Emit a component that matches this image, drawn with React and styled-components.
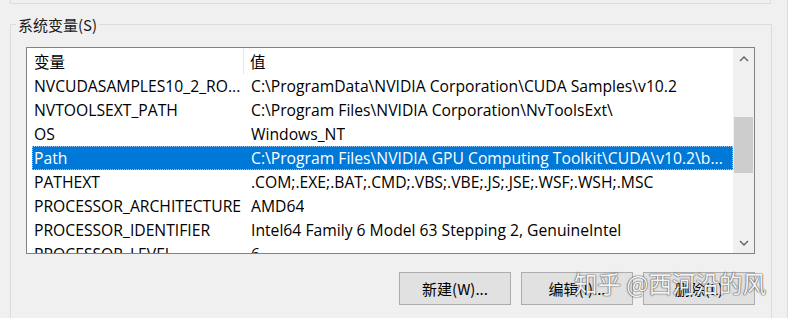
import React from "react";
import styled, { createGlobalStyle } from "styled-components";

const rows = [
  ["NVCUDASAMPLES10_2_RO...", "C:\\ProgramData\\NVIDIA Corporation\\CUDA Samples\\v10.2"],
  ["NVTOOLSEXT_PATH", "C:\\Program Files\\NVIDIA Corporation\\NvToolsExt\\"],
  ["OS", "Windows_NT"],
  ["Path", "C:\\Program Files\\NVIDIA GPU Computing Toolkit\\CUDA\\v10.2\\b..."],
  ["PATHEXT", ".COM;.EXE;.BAT;.CMD;.VBS;.VBE;.JS;.JSE;.WSF;.WSH;.MSC"],
  ["PROCESSOR_ARCHITECTURE", "AMD64"],
  ["PROCESSOR_IDENTIFIER", "Intel64 Family 6 Model 63 Stepping 2, GenuineIntel"],
  ["PROCESSOR_LEVEL", "6"],
];

const GlobalStyle = createGlobalStyle`
  html, body {
    margin: 0;
    padding: 0;
    background: #f0f0f0;
  }
  body {
    font-family: "Open Sans", "Noto Sans CJK SC", sans-serif;
    font-size: 15.7px;
    color: #000;
  }
`;

const Window = styled.div`
  width: 787px;
  height: 318px;
  border-right: 1px solid #dcdcdc;
  position: relative;
  overflow: hidden;
`;

const UpperGroup = styled.div`
  margin-left: 10px;
  width: 759px;
  height: 3px;
  border: 1px solid #dcdcdc;
  border-top: none;
`;

const Group = styled.fieldset`
  margin: 10px 0 0 10px;
  width: 729px;
  padding: 12px 16px 40px 15px;
  border: 1px solid #dcdcdc;
  border-bottom: none;
`;

const Legend = styled.legend`
  margin-left: -10px;
  padding: 0 2px;
  line-height: 21px;
  font-family: "Noto Sans CJK SC", sans-serif;
  font-size: 15px;
  color: #1a1a1a;
`;

const ListBox = styled.div`
  height: 205px;
  border: 1px solid #828282;
  background: #fff;
  display: flex;
  overflow: hidden;
`;

const Table = styled.div`
  flex: 1;
  display: flex;
  flex-direction: column;
`;

const Header = styled.div`
  height: 26px;
  display: flex;
  align-items: center;
  flex-shrink: 0;
`;

const HeadCell = styled.div`
  height: 100%;
  display: flex;
  align-items: center;
  box-sizing: border-box;
  font-family: "Noto Sans CJK SC", sans-serif;
  font-size: 15.5px;
  width: ${(p) => (p.$first ? "217px" : "auto")};
  padding-left: ${(p) => (p.$first ? "7px" : "6px")};
  border-right: ${(p) => (p.$first ? "1px solid #e5e5e5" : "none")};
`;

const Row = styled.div`
  height: 24px;
  margin-left: 5px;
  display: flex;
  align-items: center;
  flex-shrink: 0;
  box-sizing: border-box;
  white-space: nowrap;
  background: ${(p) => (p.$selected ? "#0078d7" : "transparent")};
  color: ${(p) => (p.$selected ? "#fff" : "#000")};
  outline: ${(p) => (p.$selected ? "1px dotted #9cc8ef" : "none")};
  outline-offset: -1px;
`;

const Cell = styled.div`
  padding-left: 2px;
  width: ${(p) => (p.$first ? "215px" : "auto")};
  flex-shrink: 0;
  overflow: hidden;
`;

const ScrollBar = styled.div`
  width: 21px;
  flex-shrink: 0;
  background: #f0f0f0;
  display: flex;
  flex-direction: column;
  align-items: center;
`;

const Arrow = styled.div`
  height: 21px;
  width: 100%;
  display: flex;
  align-items: center;
  justify-content: center;
`;

const Track = styled.div`
  flex: 1;
  width: 100%;
  padding-top: 48px;
  box-sizing: border-box;
`;

const Thumb = styled.div`
  width: 19px;
  margin-left: 1px;
  height: 56px;
  background: #cdcdcd;
`;

const Buttons = styled.div`
  display: flex;
  justify-content: flex-end;
  gap: 10px;
  margin-top: 18px;
`;

const Button = styled.button`
  width: 112px;
  height: 33px;
  border: 1px solid #adadad;
  background: #e1e1e1;
  font-family: "Noto Sans CJK SC", sans-serif;
  font-size: 15px;
  color: #000;
  padding: 0;
`;

const Watermark = styled.div`
  position: absolute;
  left: 574px;
  top: 269px;
  font-family: "Noto Sans CJK SC", sans-serif;
  font-size: 23.5px;
  line-height: 28px;
  color: rgba(255, 255, 255, 0.95);
  text-shadow: 0 0 1px rgba(70, 70, 70, 0.9), 0 0 1px rgba(70, 70, 70, 0.9),
    0 0 2px rgba(70, 70, 70, 0.5);
  white-space: nowrap;
  pointer-events: none;
`;

const Chevron = ({ down }) => (
  <svg width="10" height="6" viewBox="0 0 10 6">
    <path
      d={down ? "M1 1 L5 5 L9 1" : "M1 5 L5 1 L9 5"}
      fill="none"
      stroke="#606060"
      strokeWidth="1.4"
    />
  </svg>
);

export default function App() {
  return (
    <Window>
      <GlobalStyle />
      <UpperGroup />
      <Group>
        <Legend>系统变量(S)</Legend>
        <ListBox>
          <Table>
            <Header>
              <HeadCell $first>变量</HeadCell>
              <HeadCell>值</HeadCell>
            </Header>
            {rows.map(([name, value]) => (
              <Row key={name} $selected={name === "Path"}>
                <Cell $first>{name}</Cell>
                <Cell>{value}</Cell>
              </Row>
            ))}
          </Table>
          <ScrollBar>
            <Arrow>
              <Chevron />
            </Arrow>
            <Track>
              <Thumb />
            </Track>
            <Arrow>
              <Chevron down />
            </Arrow>
          </ScrollBar>
        </ListBox>
        <Buttons>
          <Button>新建(W)...</Button>
          <Button>编辑(I)...</Button>
          <Button>删除(L)</Button>
        </Buttons>
      </Group>
      <Watermark>知乎 @西河沿的风</Watermark>
    </Window>
  );
}
